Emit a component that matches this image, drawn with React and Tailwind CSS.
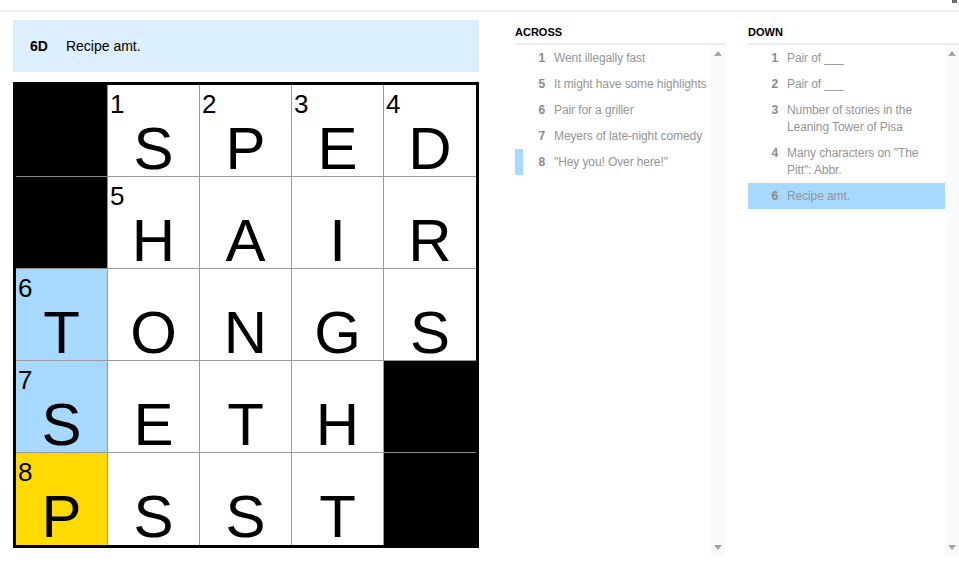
const GRID = [
  [null, { n: 1, l: 'S' }, { n: 2, l: 'P' }, { n: 3, l: 'E' }, { n: 4, l: 'D' }],
  [null, { n: 5, l: 'H' }, { l: 'A' }, { l: 'I' }, { l: 'R' }],
  [{ n: 6, l: 'T', hl: 'word' }, { l: 'O' }, { l: 'N' }, { l: 'G' }, { l: 'S' }],
  [{ n: 7, l: 'S', hl: 'word' }, { l: 'E' }, { l: 'T' }, { l: 'H' }, null],
  [{ n: 8, l: 'P', hl: 'cell' }, { l: 'S' }, { l: 'S' }, { l: 'T' }, null],
];

const ACROSS = [
  { n: 1, text: 'Went illegally fast' },
  { n: 5, text: 'It might have some highlights' },
  { n: 6, text: 'Pair for a griller' },
  { n: 7, text: 'Meyers of late-night comedy' },
  { n: 8, text: '"Hey you! Over here!"', cross: true },
];

const DOWN = [
  { n: 1, text: 'Pair of ___' },
  { n: 2, text: 'Pair of ___' },
  { n: 3, text: 'Number of stories in the Leaning Tower of Pisa' },
  { n: 4, text: 'Many characters on "The Pitt": Abbr.' },
  { n: 6, text: 'Recipe amt.', active: true },
];

function Arrow({ down }) {
  return (
    <svg width="8" height="5" viewBox="0 0 8 5" className="block">
      <path d={down ? 'M0 0H8L4 5Z' : 'M0 5H8L4 0Z'} fill="#a3a3a3" />
    </svg>
  );
}

function Cell({ cell, row, col }) {
  const edges = `${col < 4 ? 'border-r' : ''} ${row < 4 ? 'border-b' : ''}`;
  if (!cell) {
    return <div className={`h-[92px] bg-black border-[#8f8f8f] ${edges}`} />;
  }
  const bg =
    cell.hl === 'cell' ? 'bg-[#ffda00]' : cell.hl === 'word' ? 'bg-[#a7d8ff]' : 'bg-white';
  return (
    <div className={`relative h-[92px] border-[#9a9a9a] ${bg} ${edges}`}>
      {cell.n && (
        <span className="absolute left-[2px] top-[6px] text-[26px] leading-none text-black">
          {cell.n}
        </span>
      )}
      <div className="pt-[34px] text-center text-[60px] leading-none text-black">{cell.l}</div>
    </div>
  );
}

function ClueList({ title, clues, width, textPad }) {
  return (
    <div className={`flex flex-col ${width}`}>
      <div className="border-b-2 border-[#ececec] pb-[4px] pt-[14px] text-[11px] font-bold leading-[13px] text-black">
        {title}
      </div>
      <div className="flex h-[511px]">
        <ul className="flex-1">
          {clues.map((c) => (
            <li
              key={c.n}
              className={`flex border-l-[8px] py-[4.5px] text-[12px] leading-[17px] tracking-[-0.1px] ${
                c.cross ? 'border-[#a7d8ff]' : 'border-transparent'
              } ${c.active ? 'bg-[#a7d8ff]' : ''}`}
            >
              <span className="w-[22px] shrink-0 text-right font-bold text-[#8a8a8a]">{c.n}</span>
              <span className={`ml-[9px] flex-1 text-[#959595] ${textPad}`}>{c.text}</span>
            </li>
          ))}
        </ul>
        <div className="flex w-[14px] flex-col items-center justify-between bg-[#fafafa] pb-[6px] pt-[6px]">
          <Arrow />
          <Arrow down />
        </div>
      </div>
    </div>
  );
}

export default function App() {
  return (
    <div className="h-[577px] w-[959px] overflow-hidden bg-white font-['Liberation_Sans',Arial,sans-serif]">
      <div className="flex h-[10px] justify-end pr-[2px]">
        <div className="h-[3px] w-[5px] bg-[#6b6b6b]" />
      </div>
      <div className="h-[2px] bg-[#efefef]" />

      <div className="flex">
        <div className="ml-[13px] w-[466px] pt-[8px]">
          <div className="flex h-[52px] items-center bg-[#dcefff] pl-[17px] text-[14px] text-black">
            <span className="mr-[18px] font-bold">6D</span>
            <span>Recipe amt.</span>
          </div>
          <div className="mt-[10px] grid grid-cols-5 border-[3px] border-black">
            {GRID.map((row, r) =>
              row.map((cell, c) => <Cell key={`${r}-${c}`} cell={cell} row={r} col={c} />)
            )}
          </div>
        </div>

        <div className="ml-[36px]">
          <ClueList title="ACROSS" clues={ACROSS} width="w-[210px]" textPad="pr-0" />
        </div>
        <div className="ml-[23px]">
          <ClueList title="DOWN" clues={DOWN} width="w-[211px]" textPad="pr-[4px]" />
        </div>
      </div>
    </div>
  );
}
